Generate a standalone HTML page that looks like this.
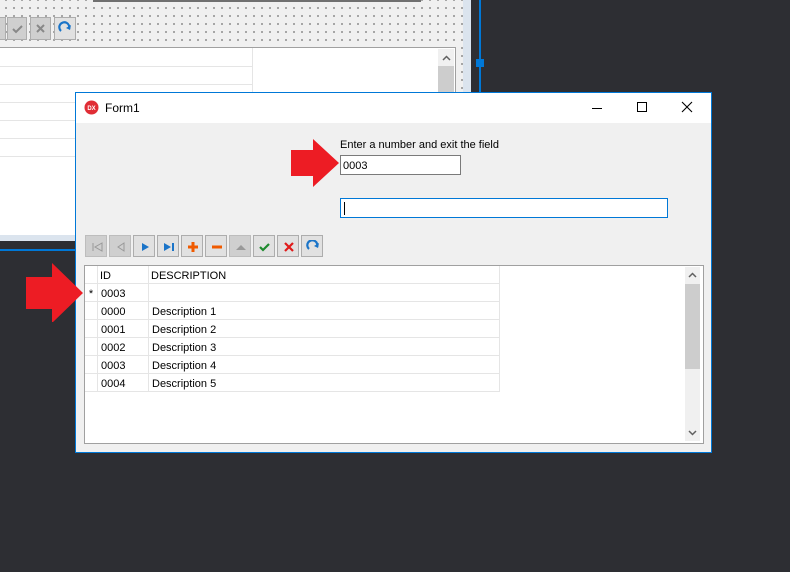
<!DOCTYPE html>
<html><head><style>
body{margin:0;width:790px;height:572px;background:#2d2e33;position:relative;overflow:hidden;font-family:"Liberation Sans",Tahoma,sans-serif;font-size:11px;color:#000}
.a{position:absolute}
.dots{background-color:#f0f0f0;background-image:radial-gradient(#444 0.6px,transparent 0.9px);background-size:8px 8px;background-position:2px 4px}
.btn{position:absolute;width:20px;height:20px;border:1px solid #adadad;background:#e1e1e1;top:0}
.btn.d{background:#cfcfcf;border-color:#bdbdbd}
.btn svg{position:absolute;left:4px;top:4px}
.row{position:absolute;left:0;height:17px;border-bottom:1px solid #e5e5e5;width:415px}
.c{position:absolute;top:0;height:18px;line-height:20px;border-right:1px solid #e5e5e5}
</style></head><body>
<div class="a dots" style="left:0;top:0;width:463px;height:234px"></div>
<div class="a" style="left:463px;top:0;width:8px;height:234px;background:#dbe4ee"></div>
<div class="a" style="left:0;top:234px;width:471px;height:7px;background:#dbe4ee"></div>
<div class="a" style="left:93px;top:0;width:328px;height:2px;background:#707070"></div>
<div class="a" style="left:0;top:47px;width:455px;height:187px;background:#fff;border-top:1px solid #a0a0a0;border-right:1px solid #a0a0a0"></div>
<div class="a" style="left:252px;top:48px;width:1px;height:185px;background:#e5e5e5"></div>
<div class="a" style="left:0;top:66px;width:252px;height:1px;background:#e5e5e5"></div>
<div class="a" style="left:0;top:84px;width:252px;height:1px;background:#e5e5e5"></div>
<div class="a" style="left:0;top:102px;width:252px;height:1px;background:#e5e5e5"></div>
<div class="a" style="left:0;top:120px;width:252px;height:1px;background:#e5e5e5"></div>
<div class="a" style="left:0;top:138px;width:252px;height:1px;background:#e5e5e5"></div>
<div class="a" style="left:0;top:156px;width:252px;height:1px;background:#e5e5e5"></div>
<div class="a" style="left:438px;top:49px;width:16px;height:185px;background:#f0f0f0"></div>
<div class="a" style="left:438px;top:66px;width:16px;height:30px;background:#cdcdcd"></div>
<svg class="a" style="left:442px;top:55px" width="9" height="6"><path d="M1 5l3.5-3.5 3.5 3.5" stroke="#606060" stroke-width="1.5" fill="none"/></svg>
<div class="a" style="left:-16px;top:17px;width:20px;height:21px;border:1px solid #adadad;background:#cfcfcf"></div>
<div class="a" style="left:7px;top:17px;width:18px;height:21px;border:1px solid #adadad;background:#cfcfcf"><svg width="18" height="21"><path d="M5 11l3 3 6-6" stroke="#888" stroke-width="2" fill="none"/></svg></div>
<div class="a" style="left:30px;top:17px;width:19px;height:21px;border:1px solid #adadad;background:#cfcfcf"><svg width="19" height="21"><path d="M6 7l7 7M13 7l-7 7" stroke="#888" stroke-width="2"/></svg></div>
<div class="a" style="left:54px;top:17px;width:20px;height:21px;border:1px solid #adadad;background:#e1e1e1"><svg width="20" height="21"><path d="M6 13a5 5 0 1 1 8 -2" stroke="#1a74c8" stroke-width="2.2" fill="none"/><path d="M11 10l4 2 1-5z" fill="#1a74c8"/></svg></div>
<div class="a" style="left:479px;top:0;width:2px;height:92px;background:#0078d7"></div>
<div class="a" style="left:476px;top:59px;width:8px;height:8px;background:#0078d7"></div>
<div class="a" style="left:0;top:249px;width:76px;height:2px;background:#0078d7"></div>
<div class="a" style="left:75px;top:92px;width:635px;height:359px;border:1px solid #0078d7;background:#f0f0f0">
 <div class="a" style="left:0;top:0;width:635px;height:30px;background:#fff"></div>
 <svg class="a" style="left:8px;top:7px" width="15" height="15"><circle cx="7.5" cy="7.5" r="7" fill="#e02d35"/><text x="7.5" y="10" font-size="6" fill="#fff" text-anchor="middle" font-family="Liberation Sans" font-weight="bold">DX</text></svg>
 <div class="a" style="left:29px;top:8px;font-size:12px">Form1</div>
 <div class="a" style="left:516px;top:15px;width:10px;height:1px;background:#000"></div>
 <div class="a" style="left:561px;top:9px;width:8px;height:8px;border:1px solid #000"></div>
 <svg class="a" style="left:605px;top:8px" width="12" height="12"><path d="M1 1l10 10M11 1l-10 10" stroke="#000" stroke-width="1.1"/></svg>
 <div class="a" style="left:264px;top:44px;line-height:16px">Enter a number and exit the field</div>
 <div class="a" style="left:264px;top:62px;width:119px;height:18px;border:1px solid #7a7a7a;background:#fff;line-height:20px;text-indent:2px">0003</div>
 <div class="a" style="left:264px;top:105px;width:326px;height:18px;border:1px solid #0078d7;background:#fff"><div class="a" style="left:3px;top:3px;width:1px;height:13px;background:#000"></div></div>
 <svg class="a" style="left:214px;top:46px" width="52" height="48"><path d="M1 11h22v-11l26 24-26 24v-11h-22z" fill="#ed1c24"/></svg>
 <div class="a" style="left:9px;top:142px;width:250px;height:22px">
  <div class="btn d" style="left:0"><svg width="14" height="14"><path d="M3 3v8M12 3l-7 4 7 4z" stroke="#999" fill="none"/></svg></div>
  <div class="btn d" style="left:24px"><svg width="14" height="14"><path d="M10 3l-6 4 6 4z" stroke="#999" fill="none"/></svg></div>
  <div class="btn" style="left:48px"><svg width="14" height="14"><path d="M4 3l7 4-7 4z" fill="#1a74c8"/></svg></div>
  <div class="btn" style="left:72px"><svg width="14" height="14"><path d="M2 3l7 4-7 4z" fill="#1a74c8"/><path d="M11 3v8" stroke="#1a74c8" stroke-width="2"/></svg></div>
  <div class="btn" style="left:96px"><svg width="14" height="14"><path d="M7 2v10M2 7h10" stroke="#f05a00" stroke-width="3"/></svg></div>
  <div class="btn" style="left:120px"><svg width="14" height="14"><path d="M2 7h10" stroke="#f05a00" stroke-width="3"/></svg></div>
  <div class="btn d" style="left:144px"><svg width="14" height="14"><path d="M2 10l5-5 5 5z" fill="#999"/></svg></div>
  <div class="btn" style="left:168px"><svg width="14" height="14"><path d="M2 7l3 3 6-6" stroke="#1e8a2e" stroke-width="2.2" fill="none"/></svg></div>
  <div class="btn" style="left:192px"><svg width="14" height="14"><path d="M3 3l8 8M11 3l-8 8" stroke="#e01b1b" stroke-width="2.2"/></svg></div>
  <div class="btn" style="left:216px"><svg width="14" height="14"><path d="M3 9a5 5 0 1 1 8 -2" stroke="#1a74c8" stroke-width="2.2" fill="none"/><path d="M8 6l4 2 1-5z" fill="#1a74c8"/></svg></div>
 </div>
 <div class="a" style="left:8px;top:172px;width:618px;height:177px;border:1px solid #a0a0a0;background:#fff">
  <div class="a" style="left:0;top:0;width:415px;height:126px">
   <div class="row" style="top:0"><div class="c" style="left:0;width:12px"></div><div class="c" style="left:13px;width:50px;text-indent:2px">ID</div><div class="c" style="left:64px;width:350px;text-indent:2px">DESCRIPTION</div></div>
   <div class="row" style="top:18px"><div class="c" style="left:0;width:12px;text-align:center">*</div><div class="c" style="left:13px;width:50px;text-indent:3px">0003</div><div class="c" style="left:64px;width:350px"></div></div>
   <div class="row" style="top:36px"><div class="c" style="left:0;width:12px"></div><div class="c" style="left:13px;width:50px;text-indent:3px">0000</div><div class="c" style="left:64px;width:350px;text-indent:3px">Description 1</div></div>
   <div class="row" style="top:54px"><div class="c" style="left:0;width:12px"></div><div class="c" style="left:13px;width:50px;text-indent:3px">0001</div><div class="c" style="left:64px;width:350px;text-indent:3px">Description 2</div></div>
   <div class="row" style="top:72px"><div class="c" style="left:0;width:12px"></div><div class="c" style="left:13px;width:50px;text-indent:3px">0002</div><div class="c" style="left:64px;width:350px;text-indent:3px">Description 3</div></div>
   <div class="row" style="top:90px"><div class="c" style="left:0;width:12px"></div><div class="c" style="left:13px;width:50px;text-indent:3px">0003</div><div class="c" style="left:64px;width:350px;text-indent:3px">Description 4</div></div>
   <div class="row" style="top:108px"><div class="c" style="left:0;width:12px"></div><div class="c" style="left:13px;width:50px;text-indent:3px">0004</div><div class="c" style="left:64px;width:350px;text-indent:3px">Description 5</div></div>
  </div>
  <div class="a" style="left:600px;top:1px;width:15px;height:174px;background:#f0f0f0"></div>
  <div class="a" style="left:600px;top:18px;width:15px;height:85px;background:#cdcdcd"></div>
  <svg class="a" style="left:603px;top:6px" width="9" height="6"><path d="M1 5l3.5-3.5 3.5 3.5" stroke="#606060" stroke-width="1.5" fill="none"/></svg>
  <svg class="a" style="left:603px;top:164px" width="9" height="6"><path d="M1 1l3.5 3.5 3.5-3.5" stroke="#606060" stroke-width="1.5" fill="none"/></svg>
 </div>
</div>
<svg class="a" style="left:24px;top:262px" width="62" height="60"><path d="M2 15h26v-14l31 30-31 30v-14h-26z" fill="#ed1c24"/></svg>
</body></html>
